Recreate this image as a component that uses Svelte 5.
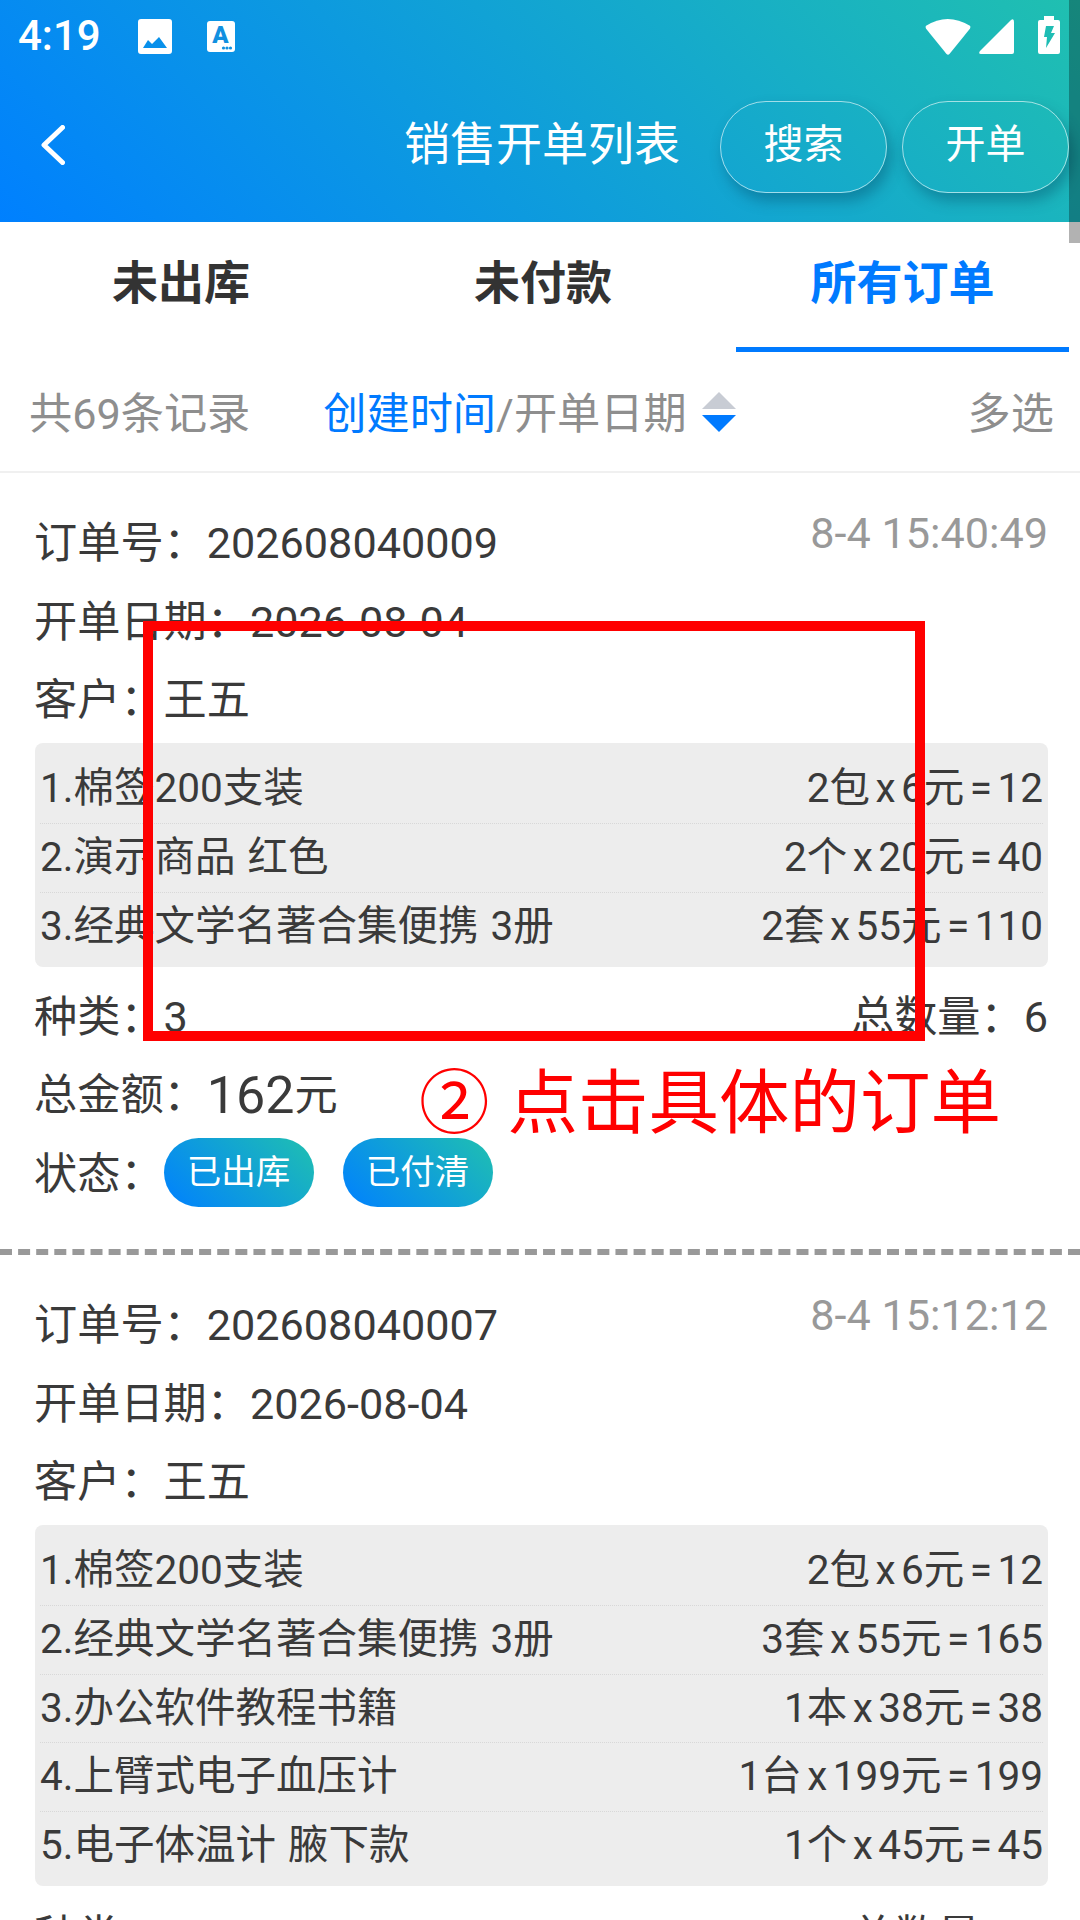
<script>
  const cards = [
    {
      no: '202608040009', time: '8-4 15:40:49',
      items: [
        ['1.棉签200支装', '2包 x 6元 = 12'],
        ['2.演示商品 红色', '2个 x 20元 = 40'],
        ['3.经典文学名著合集便携 3册', '2套 x 55元 = 110']
      ],
      kinds: 3, qty: 6, total: 162
    },
    {
      no: '202608040007', time: '8-4 15:12:12',
      items: [
        ['1.棉签200支装', '2包 x 6元 = 12'],
        ['2.经典文学名著合集便携 3册', '3套 x 55元 = 165'],
        ['3.办公软件教程书籍', '1本 x 38元 = 38'],
        ['4.上臂式电子血压计', '1台 x 199元 = 199'],
        ['5.电子体温计 腋下款', '1个 x 45元 = 45']
      ],
      kinds: 5, qty: 9, total: 559
    }
  ];
</script>

<div class="page">
  <header class="head">
    <div class="status">
      <div class="status-left">
        <span class="clock">4:19</span>
        <svg class="ic-img" width="34" height="35" viewBox="0 0 34 35">
          <path fill="#fff" fill-rule="evenodd" d="M3 0H31Q34 0 34 3V32Q34 35 31 35H3Q0 35 0 32V3Q0 0 3 0ZM5 29H29L21 18L14 25L10 21Z"/>
        </svg>
        <svg class="ic-a" width="28" height="31" viewBox="0 0 28 31">
          <rect width="28" height="31" rx="3" fill="#fff"/>
          <text x="13.5" y="22" text-anchor="middle" class="a-letter">A</text>
          <circle cx="16.5" cy="27" r="1.6" fill="#1190e0"/>
          <circle cx="20" cy="27" r="1.6" fill="#1190e0"/>
          <circle cx="23.5" cy="27" r="1.6" fill="#1190e0"/>
        </svg>
      </div>
      <div class="status-right">
        <svg width="46" height="37" viewBox="0 0 47 38">
          <path fill="#fff" d="M1 8Q23 -6 46 8Q47 9 46 11L25 37Q23.5 38.5 22 37L1 11Q0 9 1 8Z"/>
        </svg>
        <svg class="ic-signal" width="35" height="35" viewBox="0 0 35 35">
          <path fill="#fff" d="M32 1Q35 -1 35 3V33Q35 35 33 35H2Q-1 35 1 32Z"/>
        </svg>
        <svg class="ic-batt" width="22" height="38" viewBox="0 0 22 38">
          <path fill="#fff" fill-rule="evenodd" d="M6 0H16V4H20Q22 4 22 6V36Q22 38 20 38H2Q0 38 0 36V6Q0 4 2 4H6ZM8 10L6 21H9L8 32L17 17H13L16 10Z"/>
        </svg>
      </div>
    </div>
    <div class="nav">
      <div class="nav-left">
        <svg width="24" height="40" viewBox="0 0 24 40">
          <path d="M21.5 2.5L3 20L21.5 37.5" fill="none" stroke="#fff" stroke-width="5" stroke-linecap="round" stroke-linejoin="round"/>
        </svg>
      </div>
      <div class="title">销售开单列表</div>
      <div class="nav-right">
        <button class="pill">搜索</button>
        <button class="pill">开单</button>
      </div>
    </div>
  </header>

  <nav class="tabs">
    <div class="tab">未出库</div>
    <div class="tab">未付款</div>
    <div class="tab active">所有订单</div>
  </nav>

  <div class="toolbar">
    <span class="count txt">共69条记录</span>
    <div class="sort">
      <span class="blue txt">创建时间</span><span class="txt">/开单日期</span>
      <span class="arrows"><i class="up"></i><i class="down"></i></span>
    </div>
    <span class="multi txt">多选</span>
  </div>

  {#each cards as c}
    <section class="card">
      <div class="row top">
        <span>订单号：{c.no}</span>
        <span class="time">{c.time}</span>
      </div>
      <div class="row">开单日期：2026-08-04</div>
      <div class="row">客户：王五</div>
      <div class="box">
        {#each c.items as it}
          <div class="item"><span class="name">{it[0]}</span><span class="calc">{it[1]}</span></div>
        {/each}
      </div>
      <div class="row split"><span>种类：{c.kinds}</span><span>总数量：{c.qty}</span></div>
      <div class="row">总金额：<span class="amount">{c.total}</span>元</div>
      <div class="row">状态：<span class="tag">已出库</span><span class="tag">已付清</span></div>
    </section>
  {/each}

  <div class="mark-rect"></div>
  <div class="mark-text"><span class="mark-num">②</span>点击具体的订单</div>
  <div class="scroll"></div>
</div>

<style>
  :global(body) { margin: 0; background: #fff; }
  .page {
    position: relative;
    width: 1080px;
    height: 1920px;
    overflow: hidden;
    background: #fff;
    color: #3a3a3a;
    font-family: Roboto, "Noto Sans CJK SC", sans-serif;
    font-size: 43.2px;
  }
  .head {
    height: 222px;
    box-sizing: border-box;
    background: linear-gradient(45deg, #0080ff 0%, #20c0b0 100%);
    color: #fff;
  }
  .status {
    height: 72px;
    box-sizing: border-box;
    padding: 0 20px 0 18px;
    display: flex;
    justify-content: space-between;
    align-items: center;
  }
  .status-left, .status-right { display: flex; align-items: center; }
  .clock { font-size: 42px; font-weight: 500; width: 120px; line-height: 1; }
  .ic-a { margin-left: 35px; }
  .ic-signal { margin-left: 8px; }
  .ic-batt { margin-left: 24px; margin-top: -2px; }
  .a-letter { font: 900 24px Roboto, sans-serif; fill: #1190e0; }
  .nav {
    margin-top: 29px;
    height: 92px;
    padding-left: 4px;
    display: grid;
    grid-template-columns: 1fr auto 1fr;
    grid-template-rows: 92px;
    align-items: center;
  }
  .nav-left { padding-left: 37px; display: flex; margin-top: -5px; }
  .title { font-size: 46px; line-height: 86px; align-self: start; text-align: center; }
  .nav-right { display: flex; justify-content: flex-end; gap: 15px; padding-right: 11px; }
  .pill {
    width: 167px;
    height: 92px;
    border: 1px solid rgba(255, 255, 255, .6);
    border-radius: 46px;
    background: transparent;
    color: #fff;
    font: 40px/1 Roboto, "Noto Sans CJK SC", sans-serif;
    box-shadow: 4px 8px 14px rgba(0, 60, 90, .35);
    padding: 0 0 4px;
  }
  .tabs { display: grid; grid-template-columns: 362px 362px 1fr; height: 130px; }
  .tab {
    box-sizing: border-box;
    text-align: center;
    font-size: 46px;
    font-weight: 700;
    line-height: 122px;
    color: #333;
  }
  .tab.active {
    color: #007aff;
    margin: 0 11px 0 12px;
    border-bottom: 5px solid #007aff;
  }
  .toolbar {
    height: 121px;
    box-sizing: border-box;
    padding: 0 26px 0 29px;
    border-bottom: 2px solid #f0f0f0;
    display: flex;
    align-items: center;
    color: #8e8e8e;
    line-height: 60px;
  }
  .txt { padding-top: 7px; }
  .sort { display: flex; align-items: center; margin-left: 73px; }
  .multi { margin-left: auto; }
  .blue { color: #007aff; }
  .arrows { display: flex; flex-direction: column; gap: 6px; margin-left: 15px; }
  .arrows i { display: block; width: 0; height: 0; border-left: 17px solid transparent; border-right: 17px solid transparent; }
  .up { border-bottom: 17px solid #c8ccd4; }
  .down { border-top: 17px solid #007aff; }
  .card {
    padding: 32px 32px 0 34px;
    border-bottom: 6px dashed #999;
    height: 782px;
    box-sizing: border-box;
  }
  .card + .card { border-bottom: 0; height: auto; padding-top: 32px; }
  .row {
    display: flex;
    align-items: center;
    height: 78.5px;
    line-height: 78.5px;
    white-space: pre;
  }
  .row.top { align-items: flex-start; justify-content: space-between; }
  .row.split { justify-content: space-between; }
  .time { color: #999; line-height: 57px; }
  .box {
    margin: 2px 0 12px 1px;
    padding: 12px 5px 6.5px;
    background: #ededed;
    border-radius: 8px;
    font-size: 40.5px;
  }
  .item {
    height: 68.6px;
    line-height: 67px;
    box-sizing: border-box;
    display: flex;
    justify-content: space-between;
    white-space: pre;
  }
  .item + .item { border-top: 1px dotted #d8d8d8; }
  .name { word-spacing: 2px; }
  .calc { word-spacing: -4.6px; }
  .amount { font-size: 52px; }
  .tag {
    width: 150px;
    height: 69px;
    line-height: 68px;
    border-radius: 34.5px;
    margin: -6px 29px 0 0;
    text-align: center;
    font-size: 34.5px;
    color: #fff;
    background: linear-gradient(45deg, #0080ff 0%, #20c0b0 100%);
  }
  .mark-rect {
    position: absolute;
    left: 143px;
    top: 621px;
    width: 782px;
    height: 420px;
    box-sizing: border-box;
    border: 10px solid #f00;
  }
  .mark-text {
    position: absolute;
    left: 419px;
    top: 1054px;
    color: #f00;
    font-size: 70.5px;
    line-height: 100px;
    white-space: pre;
  }
  .mark-num { margin-right: 18px; }
  .scroll {
    position: absolute;
    right: 0;
    top: 0;
    width: 11px;
    height: 243px;
    background: rgba(0, 0, 0, .3);
  }
</style>
